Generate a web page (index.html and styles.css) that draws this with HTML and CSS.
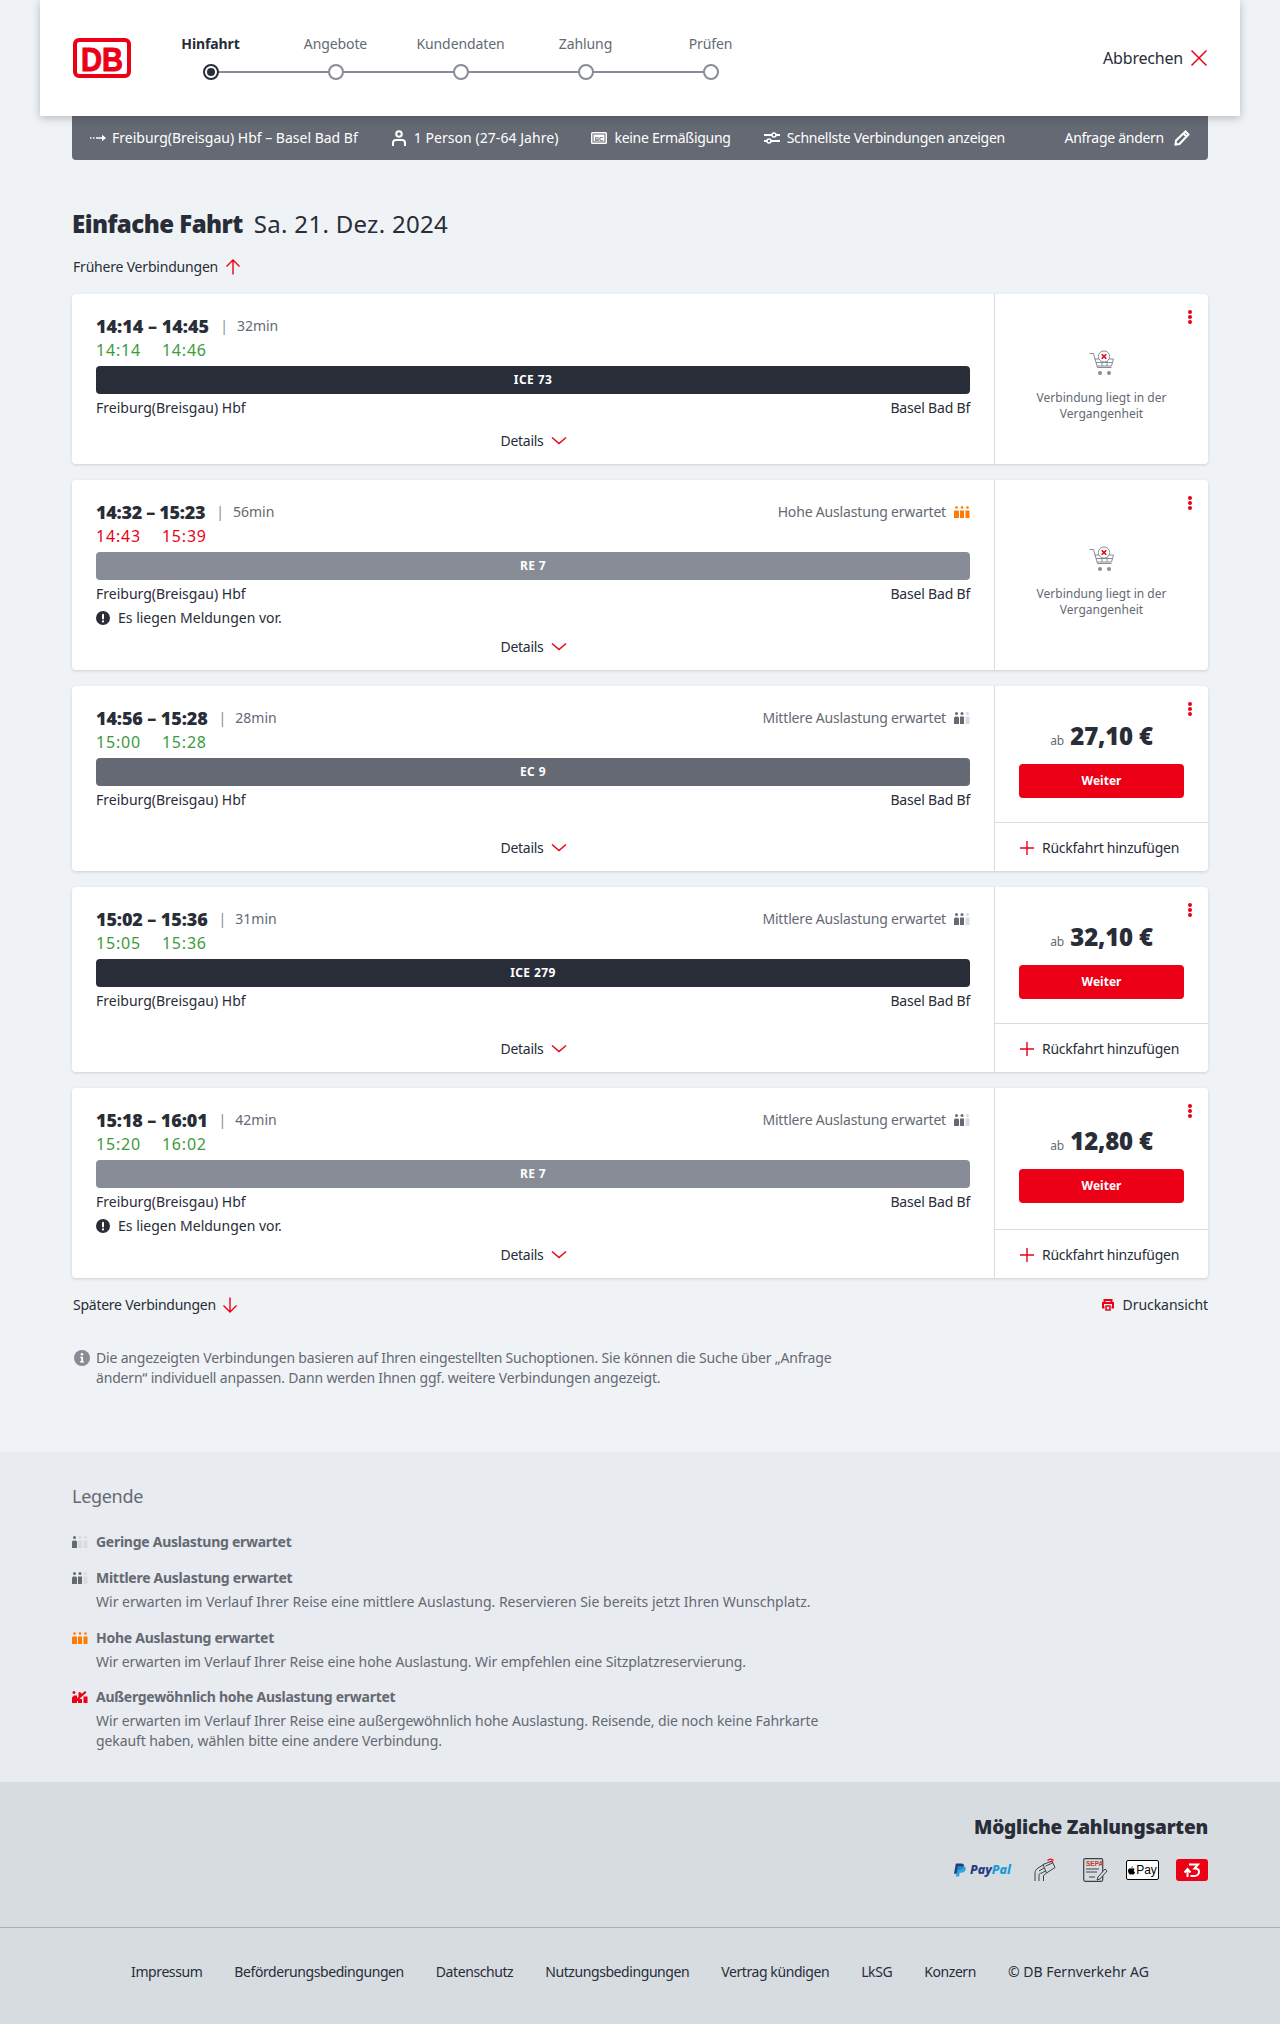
FILE: index.html
```html
<!DOCTYPE html>
<html lang="de">
<head>
<meta charset="utf-8">
<title>Verbindungen</title>
<link rel="stylesheet" href="styles.css">
</head>
<body>
<svg class="sprite" width="0" height="0" aria-hidden="true">
  <defs>
    <symbol id="i-cart" viewBox="0 0 26 26">
      <g fill="none" stroke="#878c96" stroke-width="1">
        <path d="M0.5 3.500h4l4 14h14"/>
        <path d="M5.500 9h19l-2 7H8"/>
        <path d="M7 12.500h16M13 9v7M18 9v7"/>
        <circle cx="15" cy="6.500" r="5.600" fill="#fff"/>
      </g>
      <circle cx="11" cy="23" r="2" fill="#878c96"/>
      <circle cx="20" cy="23" r="2" fill="#878c96"/>
      <path d="M12.700 4.200l4.600 4.600M17.300 4.200l-4.600 4.600" stroke="#ec0016" stroke-width="1.600" fill="none"/>
    </symbol>
    <symbol id="i-chev" viewBox="0 0 16 16"><path d="M1 4.500l7 6 7-6" fill="none" stroke="#ec0016" stroke-width="1.500"/></symbol>
    <symbol id="i-alert" viewBox="0 0 14 14"><circle cx="7" cy="7" r="7" fill="#282d37"/><rect x="6" y="2.800" width="2" height="5.600" rx="1" fill="#fff"/><circle cx="7" cy="10.400" r="1.100" fill="#fff"/></symbol>
    <symbol id="i-plus" viewBox="0 0 16 16"><path d="M8 1v14M1 8h14" stroke="#ec0016" stroke-width="1.400" fill="none"/></symbol>
  </defs>
</svg>

<header class="topbar">
  <svg class="logo" viewBox="0 0 58 40" role="img" aria-label="DB">
    <rect x="2" y="2" width="54" height="36" rx="4" fill="#fff" stroke="#ec0016" stroke-width="4"/>
    <text x="29" y="33" class="logo-text" text-anchor="middle" textLength="42" lengthAdjust="spacingAndGlyphs">DB</text>
  </svg>
  <ol class="stepper">
    <li class="step step-active"><span class="step-label">Hinfahrt</span><span class="step-dot"></span></li>
    <li class="step"><span class="step-label">Angebote</span><span class="step-dot"></span></li>
    <li class="step"><span class="step-label">Kundendaten</span><span class="step-dot"></span></li>
    <li class="step"><span class="step-label">Zahlung</span><span class="step-dot"></span></li>
    <li class="step step-last"><span class="step-label">Prüfen</span><span class="step-dot"></span></li>
  </ol>
  <a class="cancel">Abbrechen
    <svg class="icon16" viewBox="0 0 16 16"><path d="M0.500 0.500l15 15M15.500 0.500l-15 15" stroke="#ec0016" stroke-width="1.500" fill="none"/></svg>
  </a>
</header>

<main class="content">
  <div class="summary">
    <span class="sum-item sum-item-first"><svg class="icon16" viewBox="0 0 16 16"><path d="M0 8h1.500M3 8h1.500M6 8h8" stroke="#fff" stroke-width="1.500" fill="none"/><path d="M12 4.800l4 3.200-4 3.200z" fill="#fff"/></svg>Freiburg(Breisgau) Hbf – Basel Bad Bf</span>
    <span class="sum-item"><svg class="icon16" viewBox="0 0 16 16"><circle cx="8" cy="4" r="2.800" fill="none" stroke="#fff" stroke-width="2"/><path d="M2 16v-3a3 3 0 0 1 3-3h6a3 3 0 0 1 3 3v3" fill="none" stroke="#fff" stroke-width="2"/></svg><span class="sum-wide">1 Person (27-64 Jahre)</span></span>
    <span class="sum-item"><svg class="icon16" viewBox="0 0 16 16"><rect x="0" y="2" width="16" height="12" rx="1.500" fill="#fff"/><rect x="1.500" y="3.500" width="13" height="9" fill="#646973"/><rect x="2.500" y="4.500" width="11" height="7" fill="#fff"/><text x="8" y="10.500" class="bc-text" text-anchor="middle">BC</text></svg><span class="sum-tight">keine Ermäßigung</span></span>
    <span class="sum-item"><svg class="icon16" viewBox="0 0 16 16"><path d="M0 5h8M12 5h4M0 11h3M7 11h9" stroke="#fff" stroke-width="2" fill="none"/><circle cx="10" cy="5" r="2" fill="none" stroke="#fff" stroke-width="1.600"/><circle cx="5" cy="11" r="2" fill="none" stroke="#fff" stroke-width="1.600"/></svg><span class="sum-tight">Schnellste Verbindungen anzeigen</span></span>
    <span class="sum-edit"><span class="sum-tight">Anfrage ändern</span><svg class="icon16" viewBox="0 0 16 16"><path d="M11.500 1.500l3 3L5.500 14 1.500 14.500 2 10.500zM9.500 3.500l3 3" fill="none" stroke="#fff" stroke-width="2"/></svg></span>
  </div>

  <h1 class="title"><strong>Einfache Fahrt</strong><span class="title-date">Sa. 21. Dez. 2024</span></h1>

  <a class="page-link page-link-top">Frühere Verbindungen
    <svg class="icon16" viewBox="0 0 16 16"><path d="M8 15.500V1M1.500 7.500L8 1l6.500 6.500" fill="none" stroke="#ec0016" stroke-width="1.400"/></svg>
  </a>

  <section class="cards">
    <article class="card">
      <div class="trip">
        <div class="times"><span class="time-main">14:14 – 14:45</span><span class="sep">|</span><span class="dur">32min</span></div>
        <div class="rt rt-ok"><span>14:14</span><span>14:46</span></div>
        <div class="bar bar-ice">ICE 73</div>
        <div class="stations"><span>Freiburg(Breisgau) Hbf</span><span class="dest">Basel Bad Bf</span></div>
        <a class="details"><span class="details-text">Details</span> <svg class="icon16"><use href="#i-chev"/></svg></a>
      </div>
      <aside class="offer offer-past">
        <span class="dots"></span>
        <svg class="cart"><use href="#i-cart"/></svg>
        <p class="past-text">Verbindung liegt in der<br>Vergangenheit</p>
      </aside>
    </article>

    <article class="card">
      <div class="trip">
        <div class="times"><span class="time-main time-narrow">14:32 – 15:23</span><span class="sep">|</span><span class="dur">56min</span>
          <span class="load"><span class="load-text">Hohe Auslastung erwartet</span><svg class="occ" viewBox="0 0 16 12"><g class="occ-orange"><circle cx="2.500" cy="1.500" r="1.300"/><circle cx="8" cy="1.500" r="1.300"/><circle cx="13.500" cy="1.500" r="1.300"/><path d="M0 5.500a1 1 0 0 1 1-1h3a1 1 0 0 1 1 1V12H0zM6 4.500h4V12H6zM11.500 4.500h4V12h-4z"/></g></svg></span></div>
        <div class="rt rt-late"><span>14:43</span><span>15:39</span></div>
        <div class="bar bar-re">RE 7</div>
        <div class="stations"><span>Freiburg(Breisgau) Hbf</span><span class="dest">Basel Bad Bf</span></div>
        <div class="msg"><svg class="icon14"><use href="#i-alert"/></svg>Es liegen Meldungen vor.</div>
        <a class="details"><span class="details-text">Details</span> <svg class="icon16"><use href="#i-chev"/></svg></a>
      </div>
      <aside class="offer offer-past">
        <span class="dots"></span>
        <svg class="cart"><use href="#i-cart"/></svg>
        <p class="past-text">Verbindung liegt in der<br>Vergangenheit</p>
      </aside>
    </article>

    <article class="card">
      <div class="trip">
        <div class="times"><span class="time-main time-mid">14:56 – 15:28</span><span class="sep">|</span><span class="dur">28min</span>
          <span class="load"><span class="load-text">Mittlere Auslastung erwartet</span><svg class="occ" viewBox="0 0 16 12"><g class="occ-dark"><circle cx="2.500" cy="1.500" r="1.500"/><circle cx="8" cy="1.500" r="1.500"/><path d="M0 6a1.500 1.500 0 0 1 1.500-1.500h2A1.500 1.500 0 0 1 5 6v6H0zM6 4.500h4V12H6z"/></g><g class="occ-light"><circle cx="13.500" cy="1.500" r="1.500"/><path d="M11.500 4.500h4V12h-4z"/></g></svg></span></div>
        <div class="rt rt-ok"><span>15:00</span><span>15:28</span></div>
        <div class="bar bar-ec">EC 9</div>
        <div class="stations"><span>Freiburg(Breisgau) Hbf</span><span class="dest">Basel Bad Bf</span></div>
        <a class="details"><span class="details-text">Details</span> <svg class="icon16"><use href="#i-chev"/></svg></a>
      </div>
      <aside class="offer">
        <span class="dots"></span>
        <div class="offer-main">
          <div class="price"><small>ab</small> 27,10 €</div>
          <a class="btn">Weiter</a>
        </div>
        <a class="return"><svg class="icon16"><use href="#i-plus"/></svg>Rückfahrt hinzufügen</a>
      </aside>
    </article>

    <article class="card">
      <div class="trip">
        <div class="times"><span class="time-main time-mid">15:02 – 15:36</span><span class="sep">|</span><span class="dur">31min</span>
          <span class="load"><span class="load-text">Mittlere Auslastung erwartet</span><svg class="occ" viewBox="0 0 16 12"><g class="occ-dark"><circle cx="2.500" cy="1.500" r="1.500"/><circle cx="8" cy="1.500" r="1.500"/><path d="M0 6a1.500 1.500 0 0 1 1.500-1.500h2A1.500 1.500 0 0 1 5 6v6H0zM6 4.500h4V12H6z"/></g><g class="occ-light"><circle cx="13.500" cy="1.500" r="1.500"/><path d="M11.500 4.500h4V12h-4z"/></g></svg></span></div>
        <div class="rt rt-ok"><span>15:05</span><span>15:36</span></div>
        <div class="bar bar-ice">ICE 279</div>
        <div class="stations"><span>Freiburg(Breisgau) Hbf</span><span class="dest">Basel Bad Bf</span></div>
        <a class="details"><span class="details-text">Details</span> <svg class="icon16"><use href="#i-chev"/></svg></a>
      </div>
      <aside class="offer">
        <span class="dots"></span>
        <div class="offer-main">
          <div class="price"><small>ab</small> 32,10 €</div>
          <a class="btn">Weiter</a>
        </div>
        <a class="return"><svg class="icon16"><use href="#i-plus"/></svg>Rückfahrt hinzufügen</a>
      </aside>
    </article>

    <article class="card">
      <div class="trip">
        <div class="times"><span class="time-main time-mid">15:18 – 16:01</span><span class="sep">|</span><span class="dur">42min</span>
          <span class="load"><span class="load-text">Mittlere Auslastung erwartet</span><svg class="occ" viewBox="0 0 16 12"><g class="occ-dark"><circle cx="2.500" cy="1.500" r="1.500"/><circle cx="8" cy="1.500" r="1.500"/><path d="M0 6a1.500 1.500 0 0 1 1.500-1.500h2A1.500 1.500 0 0 1 5 6v6H0zM6 4.500h4V12H6z"/></g><g class="occ-light"><circle cx="13.500" cy="1.500" r="1.500"/><path d="M11.500 4.500h4V12h-4z"/></g></svg></span></div>
        <div class="rt rt-ok"><span>15:20</span><span>16:02</span></div>
        <div class="bar bar-re">RE 7</div>
        <div class="stations"><span>Freiburg(Breisgau) Hbf</span><span class="dest">Basel Bad Bf</span></div>
        <div class="msg"><svg class="icon14"><use href="#i-alert"/></svg>Es liegen Meldungen vor.</div>
        <a class="details"><span class="details-text">Details</span> <svg class="icon16"><use href="#i-chev"/></svg></a>
      </div>
      <aside class="offer">
        <span class="dots"></span>
        <div class="offer-main">
          <div class="price"><small>ab</small> 12,80 €</div>
          <a class="btn">Weiter</a>
        </div>
        <a class="return"><svg class="icon16"><use href="#i-plus"/></svg>Rückfahrt hinzufügen</a>
      </aside>
    </article>
  </section>

  <div class="below">
    <a class="page-link page-link-late">Spätere Verbindungen
      <svg class="icon16" viewBox="0 0 16 16"><path d="M8 .5V15M1.500 8.500L8 15l6.500-6.500" fill="none" stroke="#ec0016" stroke-width="1.400"/></svg>
    </a>
    <a class="print">
      <svg class="print-icon" viewBox="0 0 12 12"><path d="M2.500 3.500V1h7v2.500M2.500 8.500H1V4h10v4.500H9.500" fill="none" stroke="#ec0016" stroke-width="2"/><rect x="4" y="7" width="4" height="4" fill="none" stroke="#ec0016" stroke-width="1.500"/></svg>
      Druckansicht
    </a>
  </div>

  <div class="note">
    <svg class="note-icon" viewBox="0 0 16 16"><circle cx="8" cy="8" r="8" fill="#878c96"/><circle cx="8" cy="4.300" r="1.300" fill="#fff"/><path d="M6.300 6.800H9v4.400h1V12.500H6V11.200h1.200V8H6.300z" fill="#fff"/></svg>
    <p>Die angezeigten Verbindungen basieren auf Ihren eingestellten Suchoptionen. Sie können die Suche über „Anfrage ändern“ individuell anpassen. Dann werden Ihnen ggf. weitere Verbindungen angezeigt.</p>
  </div>
</main>

<section class="legend">
  <h2 class="legend-title">Legende</h2>
  <div class="legend-item legend-item-short">
    <svg class="occ" viewBox="0 0 16 12"><g class="occ-dark"><circle cx="2.500" cy="1.500" r="1.500"/><path d="M0 6a1.500 1.500 0 0 1 1.500-1.500h2A1.500 1.500 0 0 1 5 6v6H0z"/></g><g class="occ-light"><circle cx="8" cy="1.500" r="1.500"/><circle cx="13.500" cy="1.500" r="1.500"/><path d="M6 4.500h4V12H6zM11.500 4.500h4V12h-4z"/></g></svg>
    <div><h3>Geringe Auslastung erwartet</h3></div>
  </div>
  <div class="legend-item">
    <svg class="occ" viewBox="0 0 16 12"><g class="occ-dark"><circle cx="2.500" cy="1.500" r="1.500"/><circle cx="8" cy="1.500" r="1.500"/><path d="M0 6a1.500 1.500 0 0 1 1.500-1.500h2A1.500 1.500 0 0 1 5 6v6H0zM6 4.500h4V12H6z"/></g><g class="occ-light"><circle cx="13.500" cy="1.500" r="1.500"/><path d="M11.500 4.500h4V12h-4z"/></g></svg>
    <div><h3>Mittlere Auslastung erwartet</h3><p>Wir erwarten im Verlauf Ihrer Reise eine mittlere Auslastung. Reservieren Sie bereits jetzt Ihren Wunschplatz.</p></div>
  </div>
  <div class="legend-item">
    <svg class="occ" viewBox="0 0 16 12"><g class="occ-orange"><circle cx="2.500" cy="1.500" r="1.300"/><circle cx="8" cy="1.500" r="1.300"/><circle cx="13.500" cy="1.500" r="1.300"/><path d="M0 5.500a1 1 0 0 1 1-1h3a1 1 0 0 1 1 1V12H0zM6 4.500h4V12H6zM11.500 4.500h4V12h-4z"/></g></svg>
    <div><h3>Hohe Auslastung erwartet</h3><p class="p-tight">Wir erwarten im Verlauf Ihrer Reise eine hohe Auslastung. Wir empfehlen eine Sitzplatzreservierung.</p></div>
  </div>
  <div class="legend-item">
    <svg class="occ" viewBox="0 0 16 12"><path d="M2 3a1.500 1.500 0 1 1 0.010 0zM0 6.500L2 4.500h3V12H0zM6 8h4v4H6zM11.500 5.500h4V12h-4zM6.500 1.500L8 1l2 2-3.500 3zM13 0l1.500 1.500L5 10 3.500 8.500z" fill="#ec0016"/></svg>
    <div><h3>Außergewöhnlich hohe Auslastung erwartet</h3><p class="p-tight">Wir erwarten im Verlauf Ihrer Reise eine außergewöhnlich hohe Auslastung. Reisende, die noch keine Fahrkarte gekauft haben, wählen bitte eine andere Verbindung.</p></div>
  </div>
</section>

<section class="pay">
  <h2 class="pay-title">Mögliche Zahlungsarten</h2>
  <div class="pay-icons">
    <span class="paypal"><svg class="pp-mark" viewBox="0 0 13 14"><path d="M2 0h5.500c2.500 0 3.800 1.300 3.200 3.500C10 6.300 8 7 6 7H4.300L3.500 11H0z" fill="#253b80"/><path d="M4 3h5.500c2.500 0 3.800 1.300 3.200 3.500C12 9.300 10 10 8 10H6.300L5.500 14H2z" fill="#179bd7" opacity=".85"/></svg><em class="pp-a">Pay</em><em class="pp-b">Pal</em></span>
    <svg class="pay-card" viewBox="0 0 23 24"><g fill="none" stroke="#3c4148" stroke-width="1"><path d="M2 23v-8c0-2 1-3.500 3-5l6-3.500"/><path d="M6 23v-6.500l2-2"/><path d="M10.500 23v-5.500l3-2.500"/><path d="M10 6.500l9-3.500 3 6.500-8.500 5.500z"/><path d="M6 13l5-3M8 15.500l5-3"/><path d="M12.500 8l7-3"/></g><path d="M14.500 2.500c2-1.800 4.500-1.800 6 0M16.500 4c1-.8 2.200-.8 3 0" fill="none" stroke="#ec0016" stroke-width="1.300"/></svg>
    <svg class="pay-sepa" viewBox="0 0 25 24"><rect x=".7" y=".7" width="19" height="22.600" rx="1.500" fill="none" stroke="#3c4148" stroke-width="1.200"/><text x="3" y="7.500" class="sepa-text">SEPA</text><path d="M3 11h13M3 14h11M6 19h6" stroke="#3c4148" fill="none"/><path d="M15 19l7-8 2 2-7 8-3 1z" fill="#d7dce1" stroke="#3c4148"/></svg>
    <span class="applepay"><svg class="apple" viewBox="0 0 10 12"><path d="M7 0c.1 1-.8 2.300-2 2.400C4.900 1.300 5.900.2 7 0zM5 3.200c.6 0 1.200-.5 2.300-.5.8 0 1.700.4 2.200 1.200-1.900 1.200-1.500 3.700.5 4.500-.5 1.300-1.600 3.400-2.700 3.400-.7 0-1-.5-2-.5s-1.300.5-2 .5C1.800 11.800 0 9.100 0 6.500 0 4 1.500 2.800 2.900 2.800c.9 0 1.600.4 2.100.4z" fill="#000"/></svg>Pay</span>
    <span class="ticket"><svg viewBox="0 0 18 15" class="ticket-icon"><path d="M6 1.500h9l-3.500 4c3 0 4.500 1.200 4.500 3.200 0 2.600-2 4.300-4.500 4.300H7.500" fill="none" stroke="#fff" stroke-width="2"/><path d="M4.500 14V7M1.500 9.500l3-3.500 3 3.500" fill="none" stroke="#fff" stroke-width="2"/></svg></span>
  </div>
</section>

<footer class="footer">
  <a>Impressum</a><a>Beförderungsbedingungen</a><a>Datenschutz</a><a>Nutzungsbedingungen</a><a>Vertrag kündigen</a><a>LkSG</a><a>Konzern</a><span class="footer-copy">© DB Fernverkehr AG</span>
</footer>
</body>
</html>
```

FILE: styles.css
```css
* { box-sizing: border-box; }
html, body { margin: 0; padding: 0; }
body {
  background: #f0f3f5;
  color: #282d37;
  font: 14px/24px "Noto Sans", "Liberation Sans", sans-serif;
}
h1, h2, h3, p, ol { margin: 0; padding: 0; }
a { color: inherit; text-decoration: none; }
svg { display: block; flex: none; }
.sprite { position: absolute; }
.icon16 { width: 16px; height: 16px; }
.icon14 { width: 14px; height: 14px; }

.topbar {
  position: relative;
  z-index: 2;
  margin: 0 40px;
  height: 116px;
  background: #fff;
  box-shadow: 0 2px 8px rgba(40, 45, 55, .3);
  display: flex;
  align-items: center;
  padding: 0 33px;
}
.logo { width: 58px; height: 40px; }
.logo-text { font: 700 34px "Liberation Sans", sans-serif; fill: #ec0016; stroke: #ec0016; stroke-width: 1px; }
.bc-text { font: 700 6px "Liberation Sans", sans-serif; fill: #646973; }
.stepper { list-style: none; display: flex; margin-left: 17px; align-self: flex-start; padding-top: 32px; }
.step { width: 125px; display: flex; flex-direction: column; align-items: center; position: relative; color: #646973; }
.step-label { line-height: 24px; font-size: 14px; letter-spacing: -.1px; }
.step-active .step-label { font-weight: 700; color: #282d37; }
.step-dot {
  position: relative;
  width: 16px; height: 16px;
  margin-top: 8px;
  border: 2px solid #878c96;
  border-radius: 50%;
  background: #fff;
  z-index: 1;
}
.step:not(.step-last)::after {
  content: "";
  position: absolute;
  left: 50%;
  width: 100%;
  top: 39px;
  height: 2px;
  background: #878c96;
}
.step-active .step-dot { border-color: #282d37; }
.step-active .step-dot::after {
  content: "";
  position: absolute;
  inset: 2px;
  border-radius: 50%;
  background: #282d37;
}
.cancel { margin-left: auto; display: flex; align-items: center; gap: 8px; font-size: 16px; letter-spacing: -.2px; }

.content { padding: 0 72px 64px; }
.summary {
  height: 44px;
  background: #646973;
  color: #fff;
  border-radius: 0 0 4px 4px;
  display: flex;
  align-items: center;
  padding: 0 18px;
  gap: 33px;
}
.sum-item { display: flex; align-items: center; gap: 7px; }
.sum-item-first { gap: 6px; }
.sum-wide { letter-spacing: .05px; }
.sum-tight { letter-spacing: -.28px; }
.sum-edit { margin-left: auto; display: flex; align-items: center; gap: 10px; }

.title { margin-top: 48px; font-size: 24px; line-height: 32px; font-weight: 400; display: flex; gap: 11px; }
.title strong { font-weight: 900; letter-spacing: -.53px; }
.title-date { letter-spacing: .3px; }
.page-link { display: flex; align-items: center; gap: 7px; padding-left: 1px; letter-spacing: -.2px; }
.page-link-top { margin: 15px 0 15px; }
.page-link-late { gap: 6px; letter-spacing: -.25px; }

.cards { display: flex; flex-direction: column; gap: 16px; }
.card {
  display: grid;
  grid-template-columns: 1fr 214px;
  background: #fff;
  border-radius: 4px;
  box-shadow: 0 1px 3px rgba(40, 45, 55, .18);
}
.trip { padding: 20px 24px 11px; display: flex; flex-direction: column; min-width: 0; }
.times { display: flex; align-items: center; height: 24px; }
.time-main { font-size: 18px; font-weight: 900; letter-spacing: 0; }
.time-narrow { letter-spacing: -.3px; }
.time-mid { letter-spacing: -.12px; }
.sep { color: #878c96; margin: 0 9px 0 11px; }
.dur { color: #646973; }
.load { margin-left: auto; display: flex; align-items: center; gap: 8px; color: #646973; }
.load-text { letter-spacing: -.17px; }
.occ { width: 16px; height: 12px; }
.occ-orange { fill: #ff7a00; }
.occ-dark { fill: #646973; }
.occ-light { fill: #d7dce1; }
.rt { display: flex; gap: 21px; font-size: 16px; line-height: 24px; letter-spacing: .8px; }
.rt-ok { color: #3c9b3c; }
.rt-late { color: #ec0016; }
.bar {
  margin-top: 4px;
  height: 28px;
  border-radius: 4px;
  color: #fff;
  font-size: 12px;
  font-weight: 700;
  line-height: 28px;
  letter-spacing: .4px;
  text-align: center;
}
.bar-ice { background: #282d37; }
.bar-re { background: #878c96; }
.bar-ec { background: #646973; }
.stations { margin-top: 2px; display: flex; justify-content: space-between; }
.dest { letter-spacing: -.2px; }
.msg { display: flex; align-items: center; gap: 8px; }
.details {
  margin-top: auto;
  padding: 5px 0 0 2px;
  display: flex;
  align-items: center;
  justify-content: center;
  gap: 8px;
}
.details-text { letter-spacing: -.3px; }
.offer {
  position: relative;
  border-left: 1px solid #d7dce1;
  display: flex;
  flex-direction: column;
}
.offer-past { align-items: center; justify-content: center; padding-top: 14px; min-height: 170px; }
.dots {
  position: absolute;
  top: 16px;
  right: 16px;
  width: 4px;
  height: 4px;
  border-radius: 50%;
  background: #ec0016;
  box-shadow: 0 5px 0 #ec0016, 0 10px 0 #ec0016;
}
.cart { width: 26px; height: 26px; }
.past-text { margin-top: 14px; font-size: 12px; line-height: 16px; color: #646973; text-align: center; }
.offer-main {
  flex: 1;
  min-height: 136px;
  padding: 8px 24px 0;
  display: flex;
  flex-direction: column;
  justify-content: center;
  gap: 10px;
}
.price { height: 36px; line-height: 36px; font-size: 24px; font-weight: 900; letter-spacing: -.2px; text-align: center; white-space: nowrap; }
.price small { font-size: 12px; font-weight: 400; color: #646973; letter-spacing: 0; }
.btn {
  height: 34px;
  line-height: 34px;
  background: #ec0016;
  color: #fff;
  font-size: 12px;
  font-weight: 700;
  text-align: center;
  border-radius: 4px;
}
.return {
  height: 49px;
  border-top: 1px solid #d7dce1;
  display: flex;
  align-items: center;
  gap: 7px;
  padding: 1px 0 0 24px;
  letter-spacing: -.25px;
}

.below { display: flex; justify-content: space-between; margin-top: 15px; }
.print { display: flex; align-items: center; gap: 9px; letter-spacing: -.05px; }
.print-icon { width: 12px; height: 12px; }
.note { display: flex; gap: 6px; margin-top: 31px; color: #646973; font-size: 14px; line-height: 20px; letter-spacing: -.18px; }
.note-icon { width: 16px; height: 16px; margin: 2px 0 0 2px; }
.note p { width: 760px; }

.legend { background: #e8ebf0; padding: 32px 72px 17.5px; color: #646973; }
.legend-title { font-size: 18px; font-weight: 400; line-height: 24px; margin-bottom: 22px; letter-spacing: -.3px; }
.legend-item { display: flex; gap: 8px; margin-bottom: 13.5px; }
.legend-item-short { margin-bottom: 12px; }
.legend-item .occ { margin-top: 6px; }
.legend-item h3 { font-size: 14px; line-height: 24px; font-weight: 700; letter-spacing: -.27px; }
.legend-item p { width: 760px; margin-top: 2px; line-height: 20px; }
.legend-item .p-tight { letter-spacing: -.1px; }

.pay {
  background: #d7dce1;
  height: 146px;
  padding: 31px 72px 0;
  border-bottom: 1px solid #aab0b8;
  display: flex;
  flex-direction: column;
  align-items: flex-end;
}
.pay-title { font-size: 19px; line-height: 28px; font-weight: 900; letter-spacing: -.2px; }
.pay-icons { display: flex; align-items: center; margin-top: 17px; }
.paypal { display: flex; align-items: center; gap: 4px; font-size: 12.5px; font-weight: 800; line-height: 14px; width: 57px; }
.paypal em { font-style: italic; }
.pp-mark { width: 12px; height: 14px; }
.pp-a { color: #253b80; }
.pp-b { color: #179bd7; margin-left: -4px; }
.pay-card { width: 23px; height: 24px; margin-left: 22px; }
.pay-sepa { width: 25px; height: 24px; margin-left: 27px; }
.sepa-text { font: 700 6.5px "Liberation Sans", sans-serif; fill: #c0392b; }
.applepay {
  margin-left: 18px;
  width: 33px;
  height: 20px;
  background: #fff;
  border: 1px solid #000;
  border-radius: 2px;
  font: 12px/18px "Liberation Sans", sans-serif;
  color: #000;
  display: flex;
  align-items: center;
  justify-content: center;
  gap: 1px;
}
.apple { width: 7px; height: 9px; }
.ticket {
  margin-left: 17px;
  width: 32px;
  height: 22px;
  background: #ec0016;
  border-radius: 3px;
  display: flex;
  align-items: center;
  justify-content: center;
}
.ticket-icon { width: 18px; height: 15px; }

.footer {
  background: #d7dce1;
  height: 96px;
  padding-bottom: 8px;
  display: flex;
  justify-content: center;
  align-items: center;
  gap: 32px;
  letter-spacing: -.42px;
}
.footer-copy { letter-spacing: 0; }
```
